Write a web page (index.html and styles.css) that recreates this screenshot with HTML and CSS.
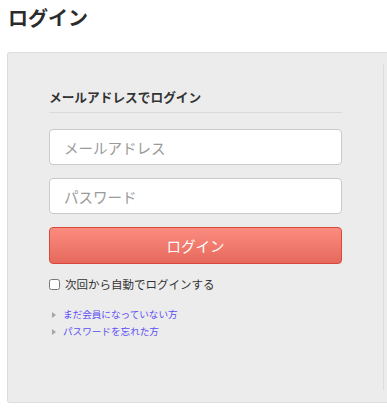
FILE: index.html
```html
<!DOCTYPE html>
<html lang="ja">
<head>
    <meta charset="UTF-8">
    <title>ログイン</title>
    <link rel="stylesheet" href="styles.css">
</head>
<body>
<h1 class="page-title">ログイン</h1>
<div class="login-panel">
    <div class="login-main">
        <form class="login-form">
            <h2 class="login-heading">メールアドレスでログイン</h2>
            <input class="login-input" type="text" placeholder="メールアドレス">
            <input class="login-input" type="password" placeholder="パスワード">
            <button class="login-btn" type="button">ログイン</button>
            <label class="remember">
                <input type="checkbox">
                <span>次回から自動でログインする</span>
            </label>
            <ul class="login-links">
                <li><a href="javascript:;">まだ会員になっていない方</a></li>
                <li><a href="javascript:;">パスワードを忘れた方</a></li>
            </ul>
        </form>
    </div>
    <div class="login-side"></div>
</div>
</body>
</html>
```

FILE: styles.css
```css
*{
    margin: 0;
    padding: 0;
    box-sizing: border-box;
}
body{
    padding-left: 7px;
    font-family: "Noto Sans CJK JP", "Noto Sans", sans-serif;
    color: #333;
    background: #fff;
}
.page-title{
    margin: 8px 0 0 1px;
    font-size: 20px;
    line-height: 20px;
    font-weight: bold;
    color: #2b2b2b;
}
/*右側は画面の外まで続く*/
.login-panel{
    display: flex;
    width: 380px;
    margin-top: 24px;
    padding: 11px 0 12px;
    background-color: #ececec;
    border: 1px solid #dcdcdc;
    border-right: none;
    border-radius: 3px 0 0 3px;
}
.login-main{
    width: 375px;
    min-height: 326px;
}
.login-side{
    flex: 1;
    border-left: 1px solid #dcdcdc;
}
/*フォーム*/
.login-form{
    width: 293px;
    margin: 0 auto;
    padding-top: 23px;
}
.login-heading{
    font-size: 12.7px;
    line-height: 19px;
    font-weight: bold;
    color: #333;
    padding-bottom: 6px;
    border-bottom: 1px solid #dadada;
    margin-bottom: 16px;
}
.login-input{
    display: block;
    width: 100%;
    height: 36px;
    padding: 0 14px;
    margin-bottom: 13px;
    border: 1px solid #cacaca;
    border-radius: 4px;
    background: #fff;
    font-family: inherit;
    font-size: 14.5px;
    color: #333;
    outline: none;
}
.login-input::placeholder{
    color: #9a9a9a;
}
.login-btn{
    display: block;
    width: 100%;
    height: 37px;
    border: 1px solid #d9473b;
    border-radius: 4px;
    background: linear-gradient(#fb8c7f, #e6695d);
    color: #fff;
    font-family: inherit;
    font-size: 14.5px;
    cursor: pointer;
}
.remember{
    display: flex;
    align-items: center;
    margin-top: 13px;
    font-size: 11.5px;
    line-height: 14px;
    color: #333;
}
.remember input{
    width: 11px;
    height: 11px;
    margin: 0 5px 0 0;
}
.login-links{
    list-style: none;
    margin-top: 15px;
}
.login-links li{
    position: relative;
    padding-left: 14px;
    font-size: 9.6px;
    line-height: 17px;
}
.login-links li::before{
    content: "";
    position: absolute;
    left: 3px;
    top: 6px;
    border-left: 4px solid #a5a5a5;
    border-top: 3px solid transparent;
    border-bottom: 3px solid transparent;
}
.login-links a{
    color: #5b4ff5;
    text-decoration: none;
}
```
